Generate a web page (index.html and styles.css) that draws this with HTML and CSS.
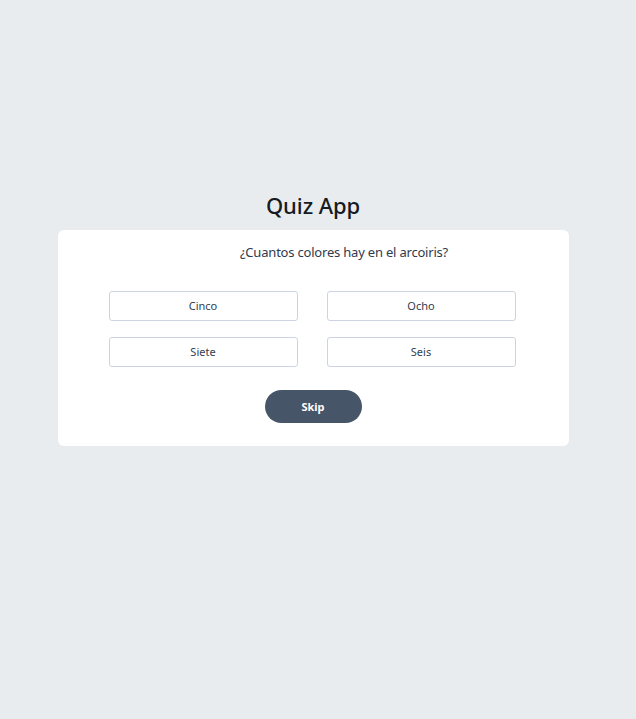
FILE: index.html
```html
<!DOCTYPE html>
<html lang="es">
<head>
<meta charset="utf-8">
<title>Quiz App</title>
<link rel="stylesheet" href="styles.css">
</head>
<body>
<main class="app">
  <h1 class="title">Quiz App</h1>
  <section class="card">
    <p class="question">¿Cuantos colores hay en el arcoiris?</p>
    <div class="options">
      <button class="option">Cinco</button>
      <button class="option">Ocho</button>
      <button class="option">Siete</button>
      <button class="option">Seis</button>
    </div>
    <button class="skip">Skip</button>
  </section>
</main>
</body>
</html>
```
FILE: styles.css
```css
html, body {
  margin: 0;
  padding: 0;
}
body {
  background: #e9ecee;
  font-family: "Noto Sans", "Open Sans", sans-serif;
  color: #1e2430;
  width: 636px;
  height: 719px;
}
.app {
  display: flex;
  flex-direction: column;
  align-items: center;
  padding-top: 188px;
  padding-right: 10px;
}
.title {
  margin: 0 0 8px;
  font-size: 22px;
  font-weight: 500;
  line-height: 34px;
  color: #161a22;
  letter-spacing: -0.1px;
}
.card {
  box-sizing: border-box;
  width: 511px;
  height: 216px;
  background: #ffffff;
  border-radius: 6px;
  display: flex;
  flex-direction: column;
  align-items: center;
  padding-top: 12px;
}
.question {
  margin: 0 0 29px;
  padding-left: 62px;
  font-size: 13px;
  line-height: 20px;
  color: #2f3a4e;
  letter-spacing: -0.2px;
}
.options {
  display: grid;
  grid-template-columns: 189px 189px;
  column-gap: 29px;
  row-gap: 16px;
  margin-right: 2px;
}
.option {
  box-sizing: border-box;
  height: 30px;
  background: #ffffff;
  border: 1.5px solid #cbd4e0;
  border-radius: 3px;
  font-family: "Noto Sans", "Open Sans", sans-serif;
  font-size: 11px;
  color: #333d50;
  padding: 0 0 2px;
}
.skip {
  margin-top: 23px;
  width: 97px;
  height: 33px;
  border: none;
  border-radius: 17px;
  background: #475569;
  color: #ffffff;
  font-family: "Noto Sans", "Open Sans", sans-serif;
  font-weight: 700;
  font-size: 11px;
  padding: 0;
}
```
